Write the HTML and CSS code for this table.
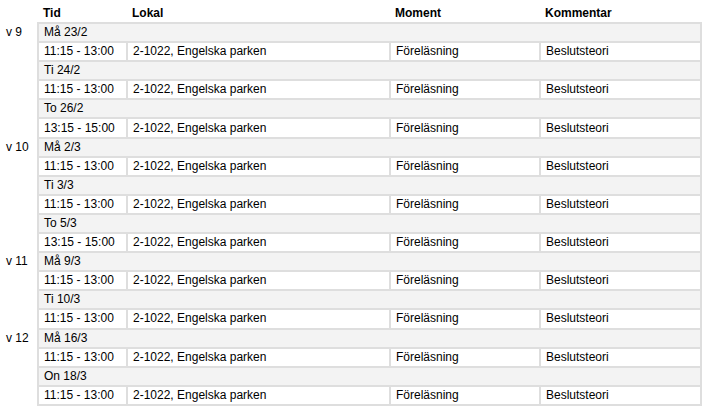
FILE: index.html
```html
<!DOCTYPE html>
<html lang="sv">
<head>
<meta charset="utf-8">
<title>Schema</title>
<link rel="stylesheet" href="styles.css">
</head>
<body>
<table class="schedule">
  <colgroup>
    <col class="c-week">
    <col class="c-tid">
    <col class="c-lokal">
    <col class="c-moment">
    <col class="c-komm">
  </colgroup>
  <thead>
    <tr class="head">
      <th class="week"></th><th>Tid</th><th>Lokal</th><th>Moment</th><th>Kommentar</th>
    </tr>
  </thead>
  <tbody>
    <tr class="date"><td class="week">v 9</td><td colspan="4">Må 23/2</td></tr>
    <tr class="item"><td class="week"></td><td>11:15 - 13:00</td><td>2-1022, Engelska parken</td><td>Föreläsning</td><td>Beslutsteori</td></tr>
    <tr class="date"><td class="week"></td><td colspan="4">Ti 24/2</td></tr>
    <tr class="item"><td class="week"></td><td>11:15 - 13:00</td><td>2-1022, Engelska parken</td><td>Föreläsning</td><td>Beslutsteori</td></tr>
    <tr class="date"><td class="week"></td><td colspan="4">To 26/2</td></tr>
    <tr class="item"><td class="week"></td><td>13:15 - 15:00</td><td>2-1022, Engelska parken</td><td>Föreläsning</td><td>Beslutsteori</td></tr>
    <tr class="date"><td class="week">v 10</td><td colspan="4">Må 2/3</td></tr>
    <tr class="item"><td class="week"></td><td>11:15 - 13:00</td><td>2-1022, Engelska parken</td><td>Föreläsning</td><td>Beslutsteori</td></tr>
    <tr class="date"><td class="week"></td><td colspan="4">Ti 3/3</td></tr>
    <tr class="item"><td class="week"></td><td>11:15 - 13:00</td><td>2-1022, Engelska parken</td><td>Föreläsning</td><td>Beslutsteori</td></tr>
    <tr class="date"><td class="week"></td><td colspan="4">To 5/3</td></tr>
    <tr class="item"><td class="week"></td><td>13:15 - 15:00</td><td>2-1022, Engelska parken</td><td>Föreläsning</td><td>Beslutsteori</td></tr>
    <tr class="date"><td class="week">v 11</td><td colspan="4">Må 9/3</td></tr>
    <tr class="item"><td class="week"></td><td>11:15 - 13:00</td><td>2-1022, Engelska parken</td><td>Föreläsning</td><td>Beslutsteori</td></tr>
    <tr class="date"><td class="week"></td><td colspan="4">Ti 10/3</td></tr>
    <tr class="item"><td class="week"></td><td>11:15 - 13:00</td><td>2-1022, Engelska parken</td><td>Föreläsning</td><td>Beslutsteori</td></tr>
    <tr class="date"><td class="week">v 12</td><td colspan="4">Må 16/3</td></tr>
    <tr class="item"><td class="week"></td><td>11:15 - 13:00</td><td>2-1022, Engelska parken</td><td>Föreläsning</td><td>Beslutsteori</td></tr>
    <tr class="date"><td class="week"></td><td colspan="4">On 18/3</td></tr>
    <tr class="item"><td class="week"></td><td>11:15 - 13:00</td><td>2-1022, Engelska parken</td><td>Föreläsning</td><td>Beslutsteori</td></tr>
  </tbody>
</table>
</body>
</html>
```
FILE: styles.css
```css
html, body {
  margin: 0;
  padding: 0;
  background: #ffffff;
}
body {
  font-family: "Liberation Sans", Arial, sans-serif;
  font-size: 12px;
  color: #000;
  padding-top: 4px;
}
.schedule {
  border-collapse: collapse;
  table-layout: fixed;
  width: 701px;
}
.c-week { width: 38px; }
.c-tid { width: 89px; }
.c-lokal { width: 263px; }
.c-moment { width: 150px; }
.c-komm { width: 161px; }

.schedule th,
.schedule td {
  padding: 0 0 0 5px;
  height: 17.1px;
  line-height: 17px;
  text-align: left;
  white-space: nowrap;
  overflow: hidden;
}
.head th {
  font-weight: bold;
  height: 18px;
  border: none;
}
.date td, .item td {
  border: 2px solid #dedede;
}
.date td { background: #f3f3f3; }
.item td { background: #ffffff; }
.schedule td.week {
  border: none;
  background: transparent;
  padding-left: 6px;
}
```
